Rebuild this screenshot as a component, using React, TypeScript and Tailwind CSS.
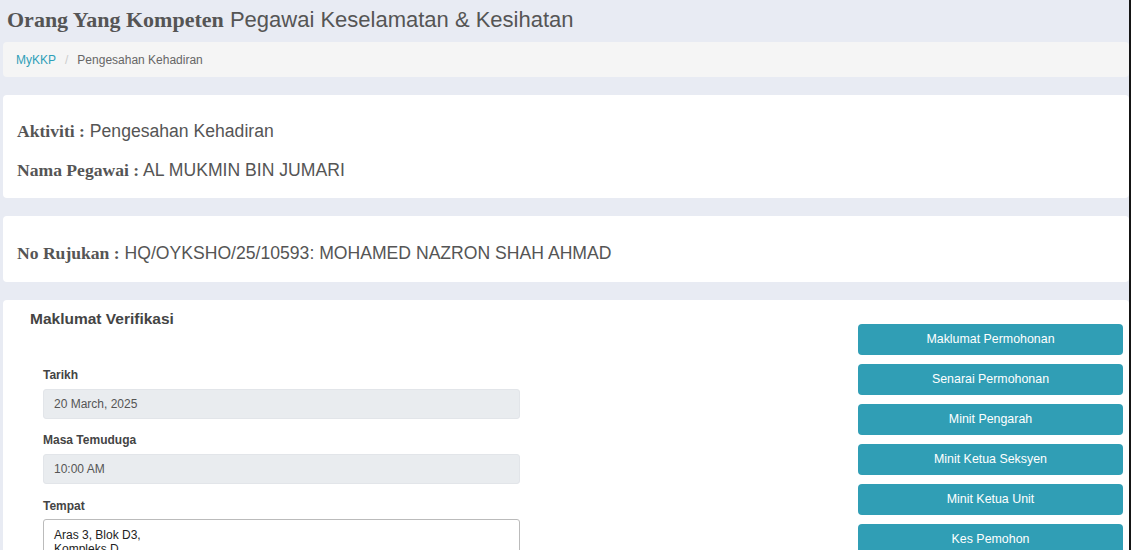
import React from "react";

const serif = { fontFamily: '"Liberation Serif", "Times New Roman", serif' };

export default function App() {
  const buttons = [
    "Maklumat Permohonan",
    "Senarai Permohonan",
    "Minit Pengarah",
    "Minit Ketua Seksyen",
    "Minit Ketua Unit",
    "Kes Pemohon",
  ];
  return (
    <div
      className="w-[1131px] h-[550px] overflow-hidden bg-[#e8ebf3] border-r-2 border-[#151515] text-[#555]"
      style={{ fontFamily: '"Liberation Sans", Arial, sans-serif' }}
    >
      <div className="pl-[3px]">
        <h1 className="pl-[4px] h-[40px] pt-[7px] text-[22px] leading-[26px] text-[#555]">
          <span className="font-bold" style={serif}>Orang Yang Kompeten</span>{" "}
          Pegawai Keselamatan &amp; Kesihatan
        </h1>
        <div className="mt-[2px] h-[35px] bg-[#f5f5f5] rounded-[4px] flex items-center pl-[13px] text-[12px]">
          <span className="text-[#2f9fb8]">MyKKP</span>
          <span className="text-[#ccc] px-[9px]">/</span>
          <span className="text-[#666]">Pengesahan Kehadiran</span>
        </div>

        <div className="mt-[18px] h-[103px] bg-white rounded-[4px] pl-[14px] pt-[25px] text-[17.6px] text-[#555]">
          <div className="leading-[22px]">
            <span className="font-bold" style={serif}>Aktiviti :</span> Pengesahan Kehadiran
          </div>
          <div className="leading-[22px] mt-[17px]">
            <span className="font-bold" style={serif}>Nama Pegawai :</span> AL MUKMIN BIN JUMARI
          </div>
        </div>

        <div className="mt-[18px] h-[66px] bg-white rounded-[4px] pl-[14px] pt-[26px] text-[17.6px] text-[#555]">
          <div className="leading-[22px]">
            <span className="font-bold" style={serif}>No Rujukan :</span> HQ/OYKSHO/25/10593: MOHAMED NAZRON SHAH AHMAD
          </div>
        </div>

        <div className="mt-[18px] h-[260px] bg-white rounded-t-[4px] flex">
          <div className="flex-1">
            <div className="pl-[27px] pt-[9px] text-[15.5px] leading-[20px] font-bold text-[#444]">
              Maklumat Verifikasi
            </div>
            <div className="pl-[40px] pt-[38px] w-[517px]">
              <div className="text-[12px] leading-[16px] font-bold text-[#444]">Tarikh</div>
              <div className="mt-[6px] h-[30px] bg-[#e9ecef] border border-[#e2e5e9] rounded-[3px] flex items-center pl-[10px] text-[12px] text-[#555]">
                20 March, 2025
              </div>
              <div className="mt-[13px] text-[12px] leading-[16px] font-bold text-[#444]">Masa Temuduga</div>
              <div className="mt-[6px] h-[30px] bg-[#e9ecef] border border-[#e2e5e9] rounded-[3px] flex items-center pl-[10px] text-[12px] text-[#555]">
                10:00 AM
              </div>
              <div className="mt-[14px] text-[12px] leading-[16px] font-bold text-[#444]">Tempat</div>
              <div className="mt-[5px] h-[60px] border border-[#bbb] rounded-[3px] pl-[10px] pt-[8px] text-[12px] leading-[14px] text-[#222]">
                Aras 3, Blok D3,
                <br />
                Kompleks D
              </div>
            </div>
          </div>
          <div className="w-[265px] mr-[6px] pt-[24px] flex flex-col gap-[9px]">
            {buttons.map((b) => (
              <div
                key={b}
                className="h-[31px] shrink-0 rounded-[4px] bg-[#309eb5] text-white text-[12.4px] flex items-center justify-center"
              >
                {b}
              </div>
            ))}
          </div>
        </div>
      </div>
    </div>
  );
}
